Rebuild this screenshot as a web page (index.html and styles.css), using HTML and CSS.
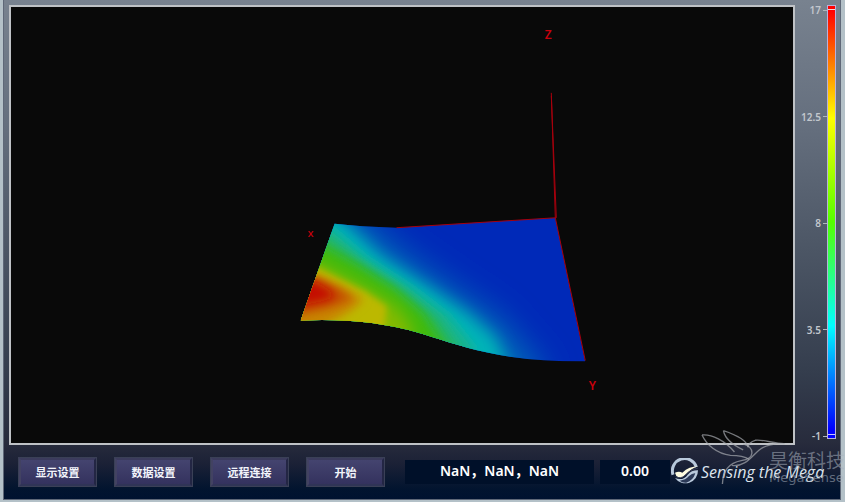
FILE: index.html
```html
<!doctype html>
<html lang="zh-CN">
<head>
<meta charset="utf-8">
<title>Sensing the Mega</title>
<meta name="viewport" content="width=device-width,initial-scale=1">
<link rel="stylesheet" href="styles.css">
</head>
<body>

<div class="app">
  <main class="view">
    <div class="plot">
      <svg viewBox="11 7 783 437" role="img" aria-label="3D surface">
        <defs>
          <clipPath id="surface">
            <path d="M335 224 Q360 227 397 228 L556 218 L586 362 Q528 362 488 353 C460 347 438 339 418 333 Q366 318 301 321 Z"/>
          </clipPath>
          <filter id="wide" x="-20%" y="-20%" width="140%" height="140%"><feGaussianBlur stdDeviation="16"/></filter>
          <filter id="mid" x="-20%" y="-20%" width="140%" height="140%"><feGaussianBlur stdDeviation="8"/></filter>
          <filter id="soft" x="-20%" y="-20%" width="140%" height="140%"><feGaussianBlur stdDeviation="5"/></filter>
          <filter id="tight" x="-20%" y="-20%" width="140%" height="140%"><feGaussianBlur stdDeviation="3"/></filter>
        </defs>

        <!-- height map, low to high -->
        <g clip-path="url(#surface)">
          <rect x="290" y="200" width="310" height="180" fill="#0029b8"/>
          <path filter="url(#wide)" fill="#0068b8" d="M330 190 L360 215 L400 250 L450 285 L500 318 L545 370 L530 440 L200 440 L200 190Z"/>
          <path filter="url(#mid)" fill="#00b4b8" d="M300 200 L340 218 L382 257 L432 289 L469 314 L496 338 L508 365 L480 400 L240 400 L240 200Z"/>
          <path filter="url(#soft)" fill="#14b490" d="M270 200 L332 228 L366 257 L412 287 L450 316 L474 346 L480 400 L240 400 L240 200Z"/>
          <path filter="url(#soft)" fill="#28b65c" d="M270 210 L332 239 L364 264 L406 292 L439 319 L460 350 L470 400 L240 400 L240 200Z"/>
          <path filter="url(#soft)" fill="#3cba08" d="M270 222 L326 247 L358 265 L394 288 L424 314 L444 345 L440 400 L240 400Z"/>
          <path filter="url(#mid)" fill="#84ba00" d="M280 250 L320 264 L345 277 L373 292 L398 308 L414 330 L400 400 L240 400Z"/>
          <path filter="url(#tight)" fill="#bcb800" d="M270 251 L318 268 L342 280 L366 292 L387 307 L384 340 L350 400 L240 400Z"/>
          <path filter="url(#soft)" fill="#c88400" d="M270 260 L320 278 L343 288 L364 300 L348 313 L318 330 L300 350 L240 350Z"/>
          <path filter="url(#soft)" fill="#c45000" d="M260 264 L319 279 L340 289 L354 299 L332 308 L306 314 L260 318Z"/>
          <path filter="url(#soft)" fill="#c40c00" d="M260 270 L318 283 L331 291 L336 297 L322 302 L302 306 L260 310Z"/>
        </g>

        <g class="axes">
          <path d="M552 93 L556 218 L586 361"/>
          <path d="M552 96 L557 218 L397 228"/>
        </g>
        <g class="axis-names">
          <text x="549" y="39">Z</text>
          <text x="311" y="237" class="small">X</text>
          <text x="593" y="391">Y</text>
        </g>
      </svg>
    </div>

    <div class="scale">
      <ol class="ticks">
        <li>17</li>
        <li>12.5</li>
        <li>8</li>
        <li>3.5</li>
        <li>-1</li>
      </ol>
      <div class="bar"></div>
    </div>
  </main>

  <footer class="toolbar">
    <div class="buttons">
      <button type="button">显示设置</button>
      <button type="button">数据设置</button>
      <button type="button">远程连接</button>
      <button type="button">开始</button>
    </div>
    <output class="field position">NaN，NaN，NaN</output>
    <output class="field value">0.00</output>
    <div class="brand">
      <svg viewBox="0 0 84 84" aria-hidden="true">
        <path d="M76 27 A36 36 0 1 0 6 50" fill="none" stroke="#b9c9dc" stroke-width="9"/>
        <path d="M12 60 Q36 70 50 50 Q62 36 81 37 A38 38 0 0 1 12 60Z" fill="#b9c9dc"/>
        <path d="M26 68 Q44 66 54 54 Q64 45 73 46 Q66 68 46 74 Q34 75 26 68Z" fill="#2c3a58"/>
        <path d="M12 44 Q24 38 34 44 Q54 25 82 25 Q60 32 46 48 Q34 62 22 58 Q14 54 12 44Z" fill="#fffce0"/>
        <path d="M14 56 Q30 64 42 52 Q58 34 80 31" fill="none" stroke="#39415a" stroke-width="3"/>
      </svg>
      <span>Sensing the Mega</span>
    </div>
  </footer>
</div>

<!-- watermark, lies over the corner -->
<div class="watermark" aria-hidden="true">
  <svg viewBox="465 25 260 172">
    <path d="M471 45 C500 42 540 62 568 96 M471 45 C485 75 515 101 556 106 C580 106 600 110 612 118"/>
    <path d="M535 32 C565 42 603 57 608 80 M535 32 C540 58 562 74 594 90"/>
    <path d="M594 72 C630 84 630 115 588 122 C545 130 533 160 532 192"/>
    <path d="M560 136 C600 142 622 106 642 90 C665 72 690 70 718 71 C690 72 650 57 630 61 C616 65 610 72 608 82"/>
  </svg>
  <div class="watermark-text">
    <span class="cn">昊衡科技</span>
    <span class="en">MegaSense</span>
  </div>
</div>

</body>
</html>
```
FILE: styles.css
```css
*{box-sizing:border-box;margin:0;padding:0}
body{
  display:flex;
  position:relative;
  min-height:100vh;
  padding:0 4px 2px 3px;
  overflow:hidden;
  background:#b4c1c8;
  font-family:"Noto Sans","Noto Sans CJK SC",sans-serif;
  color:#fff;
}

.app{
  flex:1;
  display:flex;
  flex-direction:column;
  min-width:0;
  border:1px solid #5f6878;
  border-width:0 1px 1px;
  background:linear-gradient(#78828f,#656f7e 25%,#4c5665 50%,#343d4d 75%,#272b3c 89%,#1b2136 93%,#02142f 98%,#001230);
}

/* ---------- plot and colour scale ---------- */
.view{flex:1;display:flex;padding:5px 4px 0 5px;min-height:0}
.plot{
  flex:1;
  min-width:0;
  display:flex;
  border:2px solid #bfc2c6;
  background:#090909;
}
.plot svg{flex:1;width:100%;min-width:0;display:block}
.axes path{fill:none;stroke:#a8000c;stroke-width:1}
.axis-names text{
  fill:#c8000c;
  font-size:12px;
  font-weight:600;
  text-anchor:middle;
}
.axis-names .small{font-size:9px}

.scale{
  display:flex;
  width:41px;
  padding-bottom:6px;
}
.ticks{
  flex:1;
  display:flex;
  flex-direction:column;
  justify-content:space-between;
  list-style:none;
  margin:-2px 0 -4px;
  font-size:10px;
  line-height:14px;
  font-weight:600;
  color:#c3c7cd;
}
.ticks li{display:flex;align-items:center;justify-content:flex-end;gap:2px}
.ticks li::after{content:"";width:4px;height:1px;background:#b0b5bd}
.bar{
  width:9px;
  border:1px solid #b9b0dc;
  background:
    linear-gradient(#f6d8d8,#f6d8d8) 0 3px/100% 1px no-repeat,
    linear-gradient(#c8c8ff,#c8c8ff) 0 calc(100% - 3px)/100% 1px no-repeat,
    linear-gradient(#f00,#f00 1%,#ff0 26%,#5f0 50%,#0ff 74%,#00f 98%);
}

/* ---------- bottom bar ---------- */
.toolbar{
  display:flex;
  align-items:center;
  height:54px;
  padding:0 9px 0 14px;
}
.buttons{display:flex;gap:17px;margin-right:20px}
.buttons button{
  width:79px;
  height:30px;
  border:3px solid;
  border-color:#3b3b5c #232644 #303456 #424262;
  outline:1px solid #3a4056;
  outline-offset:-1px;
  background:linear-gradient(#44446f,#34325e);
  color:#f2f4fb;
  font:bold 11px "Noto Sans CJK SC",sans-serif;
  cursor:pointer;
}
.buttons button:active{background:#2c2b52}
.field{
  height:24px;
  line-height:22px;
  background:#001029;
  font-size:14px;
  font-weight:600;
  text-align:center;
  white-space:nowrap;
}
.position{flex:1;margin-right:6px}
.value{width:70px;margin-right:1px}
.brand{
  display:flex;
  align-items:center;
  gap:2px;
  width:160px;
  font:italic 500 16px "Open Sans",sans-serif;
  color:#dce4ee;
  white-space:nowrap;
}
.brand svg{width:28px;height:28px;flex:none}

/* ---------- watermark ---------- */
.watermark{
  position:absolute;
  right:0;
  bottom:14px;
  display:flex;
  width:145px;
  height:60px;
  overflow:hidden;
  pointer-events:none;
  color:rgba(170,178,190,.55);
}
.watermark svg{width:87px;height:58px;flex:none}
.watermark path{fill:none;stroke:rgba(165,168,174,.7);stroke-width:4}
.watermark-text{margin:23px 0 0 -18px;white-space:nowrap}
.watermark-text span{display:block}
.cn{font-size:19px;line-height:20px}
.en{font-size:13px;line-height:14px;font-family:"DejaVu Sans",sans-serif}
```
